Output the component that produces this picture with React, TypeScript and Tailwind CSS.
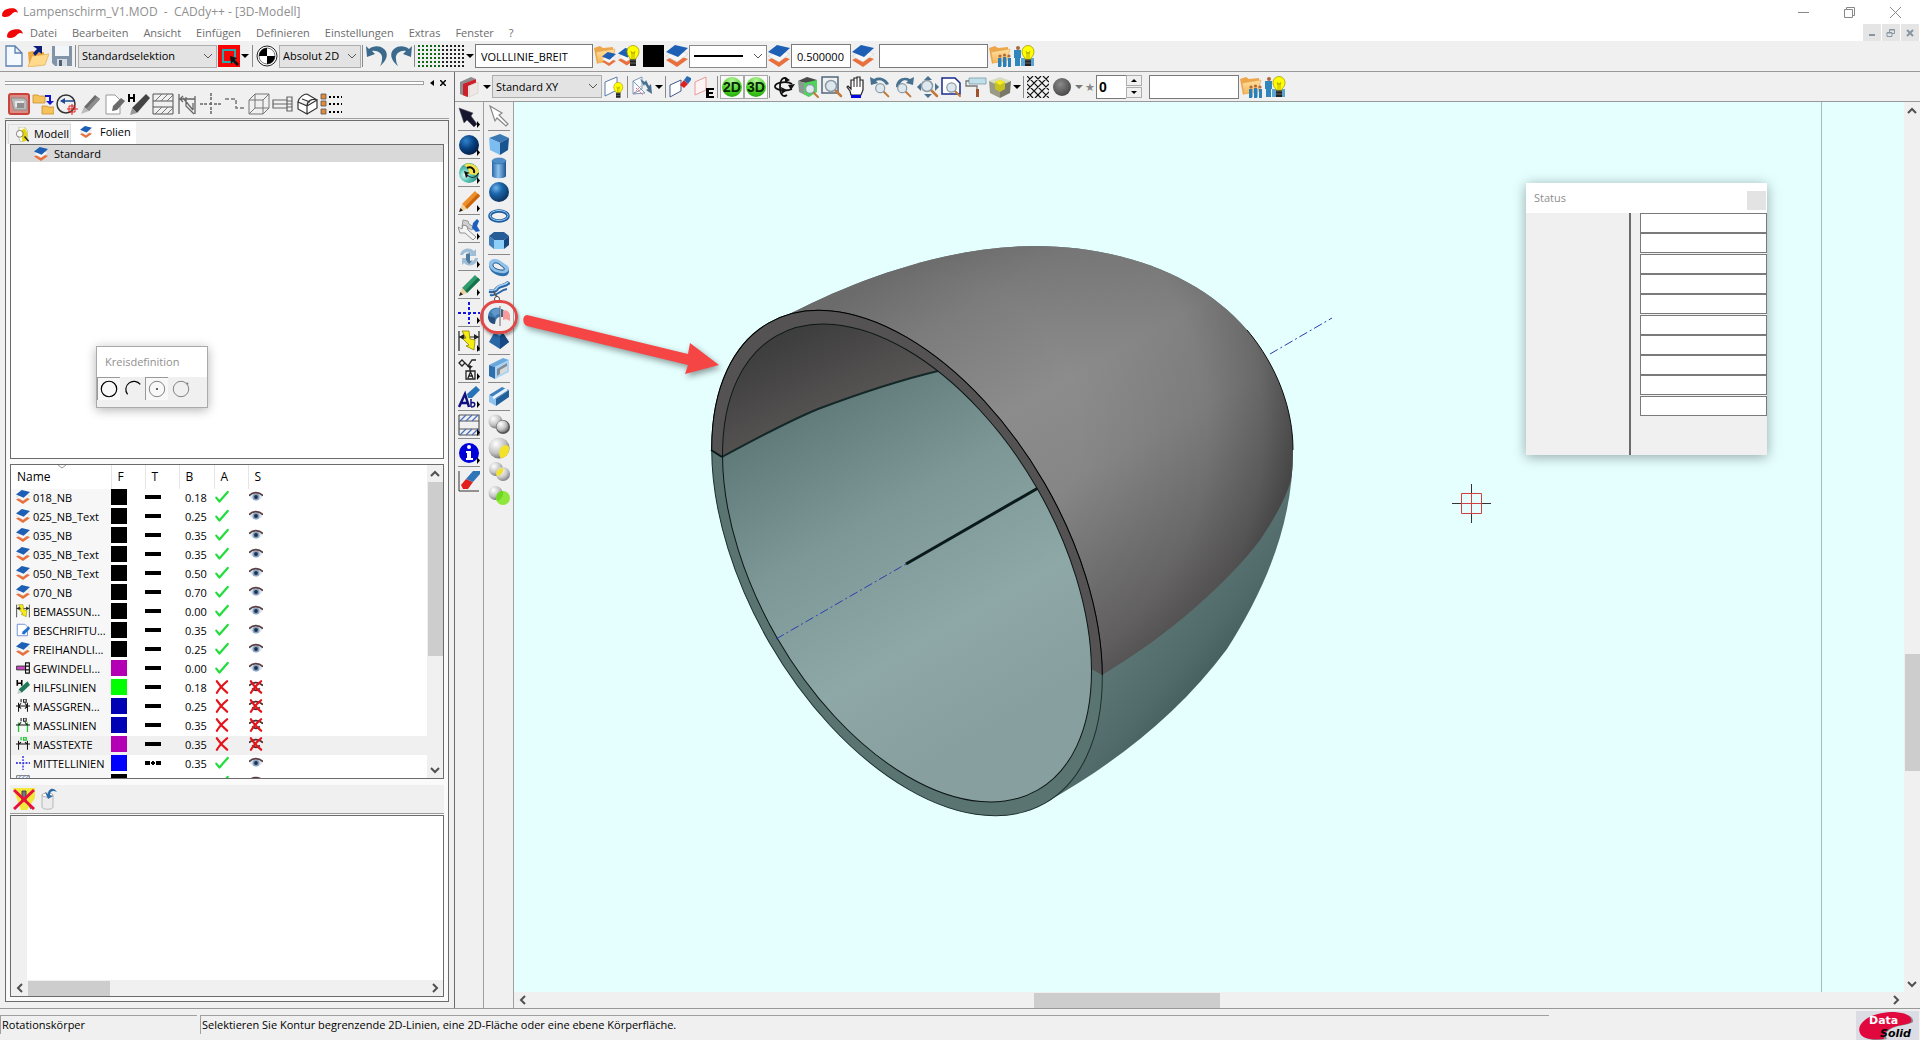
import React from 'react';
import clsx from 'clsx';

type IconProps = { children: React.ReactNode; className?: string };

const Icon: React.FC<IconProps> = ({ children, className }) => (
  <svg viewBox="0 0 22 22" className={clsx('shrink-0', className || 'w-[22px] h-[22px]')} fill="none" aria-hidden="true">
    {children}
  </svg>
);

/* Shared gradients and patterns for all icons */
const IconDefs: React.FC = () => (
  <svg className="absolute w-0 h-0" aria-hidden="true">
    <defs>
      <radialGradient id="blueBall" cx="0.35" cy="0.3" r="0.75">
        <stop offset="0" stopColor="#6fb4ec" />
        <stop offset="0.4" stopColor="#1c66ab" />
        <stop offset="1" stopColor="#0a2f5c" />
      </radialGradient>
      <radialGradient id="darkBall" cx="0.35" cy="0.3" r="0.75">
        <stop offset="0" stopColor="#2f83cc" />
        <stop offset="0.5" stopColor="#0a4384" />
        <stop offset="1" stopColor="#031c42" />
      </radialGradient>
      <radialGradient id="tealBall" cx="0.3" cy="0.6" r="0.75">
        <stop offset="0" stopColor="#e8fffb" />
        <stop offset="0.4" stopColor="#5cc4b6" />
        <stop offset="1" stopColor="#1b8074" />
      </radialGradient>
      <radialGradient id="grayBall" cx="0.35" cy="0.3" r="0.75">
        <stop offset="0" stopColor="#ffffff" />
        <stop offset="0.6" stopColor="#c2c2c2" />
        <stop offset="1" stopColor="#6f6f6f" />
      </radialGradient>
      <radialGradient id="steelBall" cx="0.4" cy="0.35" r="0.7">
        <stop offset="0" stopColor="#8a8a8a" />
        <stop offset="1" stopColor="#454545" />
      </radialGradient>
      <radialGradient id="greenBall" cx="0.5" cy="0.2" r="0.9">
        <stop offset="0" stopColor="#b5f59a" />
        <stop offset="0.6" stopColor="#45cf20" />
        <stop offset="1" stopColor="#1c9a08" />
      </radialGradient>
      <linearGradient id="blueBar" x1="0" x2="1">
        <stop offset="0" stopColor="#2a66a5" />
        <stop offset="0.45" stopColor="#8fc4ee" />
        <stop offset="1" stopColor="#1d5490" />
      </linearGradient>
      <linearGradient id="folder" x1="0" y1="0" x2="0" y2="1">
        <stop offset="0" stopColor="#ffe0a0" />
        <stop offset="1" stopColor="#f6b65a" />
      </linearGradient>
      <pattern id="dotsGreen" width="4" height="4" patternUnits="userSpaceOnUse">
        <rect width="2" height="2" fill="#0a6b14" />
      </pattern>
      <pattern id="dotsBlack" width="4" height="4" patternUnits="userSpaceOnUse">
        <rect width="2" height="2" fill="#222" />
      </pattern>
    </defs>
  </svg>
);

/* ---------- icon shapes ---------- */

const layersShape = (
  <>
    <path d="M0 15l11 7 11-8-6-2-10 0z" fill="#e8703c" />
    <path d="M0 11l11 6 11-8-5-2-11 1z" fill="#f6f6f6" stroke="#ccc" strokeWidth="0.5" />
    <path d="M0 7l9-7 13 3-10 9z" fill="#1d5fb5" />
  </>
);
const bulbShape = (
  <>
    <path d="M12 13h6v8h-6z" fill="#222" />
    <path d="M12 15h6M12 18h6" stroke="#999" strokeWidth="0.6" />
    <path d="M12 14c0-2-3-3-3-7.500a6 6 0 0 1 12 0c0 4.500-3 5.500-3 7.500z" fill="#ffff00" stroke="#a89a00" strokeWidth="0.8" />
    <path d="M13 6l1 3 1-2 1 2 1-3M14 9v4M16 9v4" stroke="#a89a00" strokeWidth="0.8" />
  </>
);
const folderShape = (
  <>
    <path d="M0 3l6-2 3 2 10-1v4L3 19z" fill="#eda74a" />
    <path d="M2 7l19-3-3 12-14 2z" fill="url(#folder)" stroke="#e0a552" strokeWidth="0.6" />
  </>
);
const peopleShape = (
  <>
    <path d="M9 13h3v9H9zM14 12h3v10h-3zM19 13h3v9h-3z" fill="#2f7fb4" />
    <path d="M12.500 13v8M17.500 13v8" stroke="#7ab8de" />
    <circle cx="11" cy="11" r="1.600" fill="#b06a3c" />
    <circle cx="15.500" cy="10" r="1.600" fill="#b06a3c" />
    <circle cx="20" cy="11" r="1.600" fill="#b06a3c" />
  </>
);
const lensShape = (
  <>
    <path d="M14 14l6 6" stroke="#c27a3a" strokeWidth="2.500" strokeLinecap="round" />
    <circle cx="10" cy="10" r="5.500" fill="#dde8ee" stroke="#8b9aa4" strokeWidth="1.500" />
  </>
);
const crossShape = <path d="M3 2c4 6 10 13 16 18M19 2C12 8 7 13 3 20" stroke="#e3141a" strokeWidth="3.500" strokeLinecap="round" />;
const flyout = <path d="M19 15v7l3-3.500z" fill="#000" />;

const pencil = (body: string, dark: string) => (
  <>
    <path d="M17 1l5 5L9 19l-5-5z" fill={body} />
    <path d="M20 3.500l2 2.500L9 19l-2-2z" fill={dark} />
    <path d="M4 14l5 5-8 3z" fill="#f1cf9a" />
    <path d="M1 22l1.500-4 2.500 2.500z" fill="#222" />
  </>
);

const icons = {
  brand: <path d="M0 16c0-7 6-10 14-10 5 0 7 3 8 6-3-2-6-1-8 1-2 4-11 7-14 3z" fill="#f00808" />,
  newFile: <path d="M3 1h9l7 7v13H3zM12 1v7h7" fill="#f4f9ff" stroke="#5a7fb4" strokeWidth="1.300" />,
  open: (
    <>
      <path d="M1 7l5-1 2 2 9-1v12H2z" fill="#eba63c" />
      <path d="M5 11l17-2-4 11-17 2z" fill="#ffd98c" stroke="#e0a040" strokeWidth="0.6" />
      <path d="M6 1h9v8l-3-2-4 4-2-3 4-4z" fill="#0b1f7a" />
    </>
  ),
  save: (
    <>
      <path d="M1 1h20v20H4l-3-3z" fill="#8295a8" />
      <path d="M4 1h14v10H4z" fill="#f3f6f9" />
      <path d="M6 14h10v7H6z" fill="#d7dde4" />
      <path d="M8 15h3v6H8z" fill="#4f6375" />
    </>
  ),
  select: (
    <>
      <path d="M0 0h22v22H0z" fill="#f80404" />
      <path d="M5 5h12v12H5z" stroke="#29a8ae" strokeWidth="2" />
      <path d="M12 11l7 2-2 2 4 4-2 2-4-4-2 2z" fill="#111" />
    </>
  ),
  origin: (
    <>
      <circle cx="11" cy="11" r="10" fill="#fff" stroke="#222" />
      <circle cx="11" cy="11" r="8" fill="#fff" stroke="#222" strokeWidth="0.6" />
      <path d="M11 11V3a8 8 0 0 0-8 8zM11 11v8a8 8 0 0 0 8-8z" fill="#000" />
    </>
  ),
  undo: <path d="M0 1l1 11 8-3-3-3c6-1 11 3 10 8 0 3-1 5-2 7 7-5 9-13 4-17C13 0 7 1 3 4z" fill="#3c6a8c" />,
  redo: <path d="M22 1l-1 11-8-3 3-3C10 5 5 9 6 14c0 3 1 5 2 7C1 16-1 8 4 4c5-4 11-3 15 0z" fill="#3c6a8c" />,
  layers: layersShape,
  folderLayers: (
    <>
      {folderShape}
      <g transform="translate(8 7) scale(0.64)">{layersShape}</g>
    </>
  ),
  layersBulb: (
    <>
      <g transform="translate(0 3) scale(0.8)">{layersShape}</g>
      {bulbShape}
    </>
  ),
  black: <path d="M1 0h21v22H1z" fill="#000" />,
  folderPeople: (
    <>
      {folderShape}
      {peopleShape}
    </>
  ),
  peopleBulb: (
    <>
      <path d="M1 5h7v8H7v8H2v-8H1z" fill="#2f86bd" />
      <circle cx="5" cy="3" r="2" fill="#a8683c" />
      <path d="M8 13h13v8H8z" fill="#5aa5d2" />
      {bulbShape}
    </>
  ),
  redSlab: (
    <>
      <path d="M1 6l11-5 5 2-9 4v14l-7-3z" fill="#8e8e8e" />
      <path d="M4 8l13-5v4l-8 3v11l-5-2z" fill="#cf1f2a" />
      <path d="M10 10l9-4v11l-9 4z" fill="#efe6e6" stroke="#ccb" strokeWidth="0.6" />
    </>
  ),
  planeBulb: (
    <>
      <path d="M2 6l12-5v13L2 20z" stroke="#5b7ba6" fill="#fff" />
      <g transform="translate(4 6) scale(0.75)">{bulbShape}</g>
    </>
  ),
  planeRotate: (
    <>
      <path d="M2 5l9-4v12l-9 5zM2 5l12 12-12 1" stroke="#7f97b8" fill="#f8fbff" />
      <path d="M3 17l7-7M5 12l7 7" stroke="#e06a6a" strokeDasharray="2 1" />
      <path d="M9 3l5 3 1-2 3 6 2-2 1 10-6-4 2-1-3-5-1 2z" fill="#47718f" />
    </>
  ),
  planeErase: (
    <>
      <path d="M1 9l11-5v11L1 21z" stroke="#44598a" fill="#fff" />
      <path d="M11 9l4-5 4 4-4 4z" fill="#e01f1f" />
      <path d="M15 4l3-4 4 2v2l-3 4z" fill="#2b6bb5" />
    </>
  ),
  planeE: (
    <>
      <path d="M2 6l11-5v13L2 19z" stroke="#e89a9a" fill="#fff4f4" />
      <path d="M13 12h8v2h-5v2h4v2h-4v2h5v2h-8z" fill="#000" />
    </>
  ),
  orbit: (
    <>
      <path d="M14 3C10 0 7 4 7 11s3 11 7 8" stroke="#111" strokeWidth="1.800" />
      <path d="M12 1l5 3-5 3z" fill="#111" />
      <path d="M19 8C15 5 3 6 2 10s10 6 17 3" stroke="#111" strokeWidth="1.800" />
      <path d="M8 11l6 3-5 4zM22 8l-4 6-3-5z" fill="#111" />
    </>
  ),
  greenCube: (
    <>
      <path d="M1 5l9-4 10 3-8 4z" fill="#4a4a4a" />
      <path d="M1 5l11 3v13L2 16z" fill="#8b9a90" />
      <path d="M7 7l13-3v12l-8 5-5-3z" fill="#4ed45a" />
      <g transform="translate(5 5) scale(0.8)">{lensShape}</g>
    </>
  ),
  zoomWindow: (
    <>
      <path d="M1 1h16v16H1z" stroke="#53677d" strokeWidth="1.500" />
      {lensShape}
    </>
  ),
  hand: (
    <>
      <path d="M6 19l-1-4-3-4 1-1 3 3V4h3V2h3V1h3v3h3v10l-2 5z" fill="#fff" stroke="#222" strokeWidth="1.200" />
      <path d="M9 4v7M12 2v9M15 4v7" stroke="#222" />
      <path d="M6 19h10v3H6z" fill="#0808e0" />
    </>
  ),
  zoomBack: (
    <>
      <path d="M1 1l1 8 7-2-2-2c4-2 8 0 10 4l3-1C17 2 10 0 5 3z" fill="#47718f" />
      <g transform="translate(3 4) scale(0.82)">{lensShape}</g>
    </>
  ),
  zoomForward: (
    <>
      <path d="M21 1l-1 8-7-2 2-2c-4-2-8 0-9 7l-3-1C3 3 11 0 17 3z" fill="#47718f" />
      <g transform="translate(1 4) scale(0.82)">{lensShape}</g>
    </>
  ),
  zoomAll: (
    <>
      <path d="M11 0l4 4H7zM11 22l4-4H7zM0 11l4-4v8zM22 11l-4-4v8z" fill="#47718f" />
      {lensShape}
    </>
  ),
  zoomPage: (
    <>
      <path d="M1 2h13l5 5v11H1z" fill="#fff" stroke="#1a2a8c" strokeWidth="1.500" />
      <g transform="translate(2 3) scale(0.85)">{lensShape}</g>
    </>
  ),
  roller: (
    <>
      <path d="M4 2h17v6H4z" fill="#bfe0ea" stroke="#7d9ba6" strokeWidth="0.8" />
      <path d="M4 5H1v5h11v4" stroke="#777" strokeWidth="1.300" />
      <path d="M11 13h3v8h-3z" fill="#a0522d" />
    </>
  ),
  boxCube: (
    <>
      <path d="M0 5l11-4 11 4-11 5z" fill="#d8dcc0" />
      <path d="M0 5l11 5v12L1 17z" fill="#9a9a86" />
      <path d="M11 10l11-5-1 12-10 5z" fill="#77776a" />
      <path d="M6 6l5-2 5 2v7l-5 3-5-3z" fill="#c8c220" />
      <path d="M6 6l5-2 5 2-5 3z" fill="#f4ee20" />
    </>
  ),
  hatch: <path d="M0 6l6-6M0 14L14 0M0 22L22 0M8 22L22 8M16 22l6-6M0 16l6 6M0 8l14 14M0 0l22 22M8 0l14 14M16 0l6 6" stroke="#111" strokeWidth="1.200" />,
  steel: <circle cx="11" cy="11" r="9" fill="url(#steelBall)" />,

  /* layer dock toolbar */
  dockLayer: (
    <>
      <rect x="1" y="1" width="20" height="20" rx="2" fill="#d98d86" stroke="#c8443c" strokeWidth="2" />
      <path d="M3 5h13l3 3v9H6z" fill="#b9b9b9" stroke="#8a8a8a" />
      <path d="M7 8h9v6H7z" fill="#e6e6e6" />
      <path d="M9 10h7v5H9z" fill="#8d8d8d" />
    </>
  ),
  dockFolders: (
    <>
      <path d="M1 2h5l1 1h6v7H1zM10 13h5l1 1h6v7H10z" fill="#f5c35a" stroke="#c9912d" strokeWidth="0.800" />
      <path d="M13 3h5v6" stroke="#1414c8" strokeWidth="2" />
      <path d="M14 8h8l-4 4z" fill="#1414c8" />
    </>
  ),
  dockCircle: (
    <>
      <circle cx="10" cy="11" r="9" stroke="#333" strokeWidth="1.500" />
      <path d="M5 8h13" stroke="#1d4a94" strokeWidth="1.500" />
      <path d="M4 8l5-3v6z" fill="#1d4a94" />
      <path d="M13 13h6v6h-6zM11 16h11M16 11v11" stroke="#d22" />
    </>
  ),
  dockPencil: (
    <>
      <path d="M15 2l5 4L9 18l-5-4z" fill="#6b6b6b" />
      <path d="M17 4l3 2L9 18l-3-2z" fill="#8d8d8d" />
      <path d="M4 14l5 4-8 3z" fill="#bbb" />
    </>
  ),
  dockSheet: (
    <>
      <path d="M2 2h9l5 5v14H2z" fill="#fff" stroke="#999" />
      <path d="M17 5l4 3-8 9-5 1 1-5z" fill="#6b6b6b" />
    </>
  ),
  dockHPencil: (
    <>
      <path d="M1 1v8M6 1v8M1 5h5" stroke="#000" strokeWidth="2" />
      <path d="M18 1l4 4L9 20l-5-5z" fill="#444" />
      <path d="M4 15l5 5-7 2z" fill="#999" />
    </>
  ),
  dockHatch: (
    <>
      <path d="M1 1h20v7H1zM1 14h20v7H1zM1 8v6M21 8v6" stroke="#555" />
      <path d="M3 8l7-7M9 8l7-7M15 8l6-6M3 21l7-7M9 21l7-7M15 21l6-6" stroke="#777" />
    </>
  ),
  dockDim: <path d="M3 1v20M19 3v18M3 6h16M7 3l-3 3 3 3M7 5l10 12M10 4v9l8 8M17 10v7" stroke="#666" strokeWidth="1.300" />,
  dockCross: <path d="M0 11h8M14 11h8M11 0v8M11 14v8M9 11h4M11 9v4" stroke="#666" strokeWidth="1.500" strokeDasharray="3 1" />,
  dockStep: <path d="M1 6h11v9h10" stroke="#777" strokeWidth="1.500" strokeDasharray="4 2" />,
  dockWire: <path d="M1 7h14v14H1zM7 1h14v14H7zM1 7l6-6M15 7l6-6M15 21l6-6M1 21l6-6" stroke="#777" />,
  dockBolt: <path d="M1 7h14v8H1zM15 4h5v14h-5zM1 11h19M15 8h5M15 14h5" stroke="#666" strokeWidth="1.200" />,
  dockBlock: <path d="M2 9l9 4v8l-9-5zM11 13l10-6v8l-10 6M2 9c1-5 6-8 9-8l10 6M11 13c0-5 5-8 10-6M6 6l8 3" stroke="#333" strokeWidth="1.200" fill="#fff" />,
  dockList: (
    <>
      <path d="M1 1h5v5H1zM1 8h5v5H1zM1 16h5v5H1z" fill="#e08a3c" stroke="#555" strokeWidth="0.800" />
      <path d="M9 4h13M9 11h13M9 19h13" stroke="#000" strokeWidth="2" strokeDasharray="2 2" />
    </>
  ),

  /* vertical tools */
  cursorDark: <path d="M1 2l14 5-2 3 6 8-3 3-7-7-3 3z" fill="#15152e" stroke="#556" strokeWidth="0.600" />,
  cursorLight: <path d="M2 1l12 7-3 2 9 9-2 2-9-8-2 3z" fill="#fff" stroke="#888" strokeWidth="1.200" />,
  ballDark: <circle cx="11" cy="11" r="10" fill="url(#darkBall)" />,
  ballTurn: (
    <>
      <circle cx="11" cy="11" r="10" fill="url(#tealBall)" />
      <path d="M6 3c6-4 14 0 15 7l-3 3-8-1c2-3 0-6-4-9z" fill="#f2e44a" />
      <path d="M9 6c4-2 8 1 7 5" stroke="#111" strokeWidth="2" />
      <path d="M20 11c-2 5-8 5-11 1l3-1-6-2 2 7 2-2c3 3 9 2 11-3z" fill="#111" />
    </>
  ),
  pencilOrange: pencil('#ee8e2a', '#c8640c'),
  pencilGreen: pencil('#2e9c6c', '#16704a'),
  wrench: (
    <>
      <path d="M5 2l5 1 1 3 5 3-2 3-6-3-4 0z" fill="#cfcfcf" stroke="#888" strokeWidth="0.800" />
      <path d="M15 5l4-4 2 2-2 5 3 5-4 1-4-4z" fill="#1b5fc0" />
      <path d="M0 9l4 2 1-4 4 1 1 4 8 7-3 3-8-7-5 0z" fill="#f4f4f4" stroke="#777" strokeWidth="0.800" />
    </>
  ),
  refresh: (
    <>
      <path d="M2 9c1-6 9-9 14-4l2-2v7h-7l2-2c-3-3-7-2-8 1zM20 12c-1 7-9 10-14 5l-2 2v-7h7l-2 2c3 3 7 2 8-2z" fill="#9fbdd4" />
      <path d="M8 8l4-1v8l3-1-4 4-3-4z" fill="#4d7ba0" />
    </>
  ),
  axes: <path d="M11 0v22M0 11h22" stroke="#1515e0" strokeWidth="2" strokeDasharray="3 2" />,
  dimension: (
    <>
      <path d="M1 1v20M21 1v20M1 7h20" stroke="#222" strokeWidth="1.200" />
      <path d="M1 7l5-3v6zM21 7l-5-3v6z" fill="#222" />
      <path d="M4 1l7 0 1 8 5 1-1 10-8-4 3-1-6-6 3-1z" fill="#f7ec14" stroke="#8a8200" strokeWidth="0.800" />
    </>
  ),
  tolerance: (
    <>
      <path d="M1 5l3-3 3 3-3 3zM7 5l3 3 4-6h4M12 7v6M8 13h9v8H8zM10 20l2.500-6 2.500 6M11 18h4" stroke="#222" strokeWidth="1.300" />
      <path d="M9 8h6l-3 3z" fill="#222" />
    </>
  ),
  textTool: (
    <>
      <path d="M1 21L7 8l4 13M3 17h7" stroke="#101080" strokeWidth="2.500" />
      <path d="M10 12l-1-4 9-8 4 4-8 8z" fill="#2673b8" />
      <path d="M13 13v8M13 17c5-2 5 4 0 4" stroke="#101080" strokeWidth="1.500" />
    </>
  ),
  hatchTool: (
    <>
      <path d="M1 1h20v20H1M1 1v20M1 7h20M1 15h20" stroke="#555" strokeWidth="1.200" />
      <path d="M2 7l6-6M8 7l6-6M14 7l6-6M2 21l6-6M8 21l6-6M14 21l6-6" stroke="#4a6fc0" strokeWidth="1.300" />
    </>
  ),
  info: (
    <>
      <circle cx="11" cy="11" r="10" fill="#0000d8" />
      <circle cx="11" cy="5" r="2" fill="#fff" />
      <path d="M8 9h5v7h2v2H8v-2h1v-5H8z" fill="#fff" />
    </>
  ),
  eraser: (
    <>
      <path d="M1 1v20h20" stroke="#333" />
      <path d="M3 15l5-6 7 3-5 7H5z" fill="#e01f1f" />
      <path d="M8 9l7-8h7v3l-7 8z" fill="#2f76b8" />
    </>
  ),
  cube: (
    <>
      <path d="M1 5l11-4 9 4-9 5z" fill="#3978b4" />
      <path d="M1 5l11 5v12L2 17z" fill="#7dbcf0" />
      <path d="M12 10l9-5-1 12-8 5z" fill="#1a548f" />
    </>
  ),
  cylinder: (
    <>
      <path d="M4 4v15c0 3 14 3 14 0V4z" fill="url(#blueBar)" />
      <ellipse cx="11" cy="4" rx="7" ry="3" fill="#4d8dc8" stroke="#245f9c" strokeWidth="0.500" />
    </>
  ),
  ball: <circle cx="11" cy="11" r="10" fill="url(#blueBall)" />,
  torus: (
    <>
      <ellipse cx="11" cy="11" rx="9" ry="5" stroke="#1c5b9c" strokeWidth="3.500" />
      <ellipse cx="11" cy="10.500" rx="9" ry="5" stroke="#9ed0f8" strokeWidth="1" />
    </>
  ),
  prism: (
    <>
      <path d="M1 7l5-4h10l5 4-5 4H6z" fill="#265d96" />
      <path d="M1 7l5 4v9l-5-4z" fill="#3f80bd" />
      <path d="M6 11h10v9H6z" fill="#8cd0fa" />
      <path d="M16 11l5-4v9l-5 4z" fill="#164780" />
    </>
  ),
  sweep: (
    <>
      <path d="M1 8c0-5 6-6 10-4l9 6c2 4 1 8-3 9-6 1-16-3-16-11z" fill="#2f6fae" />
      <path d="M1 7c0-5 6-6 10-4l9 6c2 4 0 6-3 7C11 17 1 14 1 7z" fill="#8fc0ea" />
      <path d="M5 8c0-2 3-3 6-1l5 4c1 2 0 2-2 2-4 0-9-2-9-5z" fill="#efefef" stroke="#1d5490" />
    </>
  ),
  pipe: (
    <>
      <path d="M1 10c9 1 6-2 10-4s7-1 10-5" stroke="#2a66a5" strokeWidth="4" />
      <path d="M1 9c9 1 6-2 10-4s7-1 9-4" stroke="#a8d3f5" strokeWidth="1.500" />
      <path d="M2 14c8 2 9-5 17-6" stroke="#2a66a5" strokeWidth="2" />
      <path d="M5 10l4 6" stroke="#555" strokeWidth="1.500" />
      <circle cx="9" cy="18" r="2.500" stroke="#444" fill="#fff" />
    </>
  ),
  revolve: (
    <>
      <path d="M0 11C1 4 6 2 12 3v9c-3 0-4 2-5 7-4 0-7-3-7-8z" fill="#3f78ae" />
      <path d="M3 7c2-3 5-4 9-4v6c-3 0-4 1-5 3z" fill="#5f98cc" />
      <path d="M0 11l7 2v6c-4 0-7-3-7-8z" fill="#2a4f7a" />
      <path d="M12 1v20" stroke="#666" />
      <path d="M13 4c3 0 4 3 4 8h-4z" fill="#39658f" />
      <path d="M15 6c4-2 6 1 7 4v6c-3-2-5-2-7-1z" fill="#f79a9a" />
    </>
  ),
  pyramid: (
    <>
      <path d="M6 4h9l6 9-9 7-11-7z" fill="#2a67a6" />
      <path d="M6 4h9l-3 3z" fill="#8cc2ee" />
      <path d="M12 7l3-3 6 9-9 7z" fill="#174a84" />
    </>
  ),
  shell: (
    <>
      <path d="M1 8l14-7 6 2-14 7z" fill="#6aa8de" />
      <path d="M1 8l6 2v12l-6-3z" fill="#2f6fae" />
      <path d="M7 10l14-7v12L7 22z" fill="#a8d3f5" />
      <path d="M9 12l10-6v8l-10 5z" fill="#d9d9d9" />
      <path d="M9 12l10-6v3l-7 4v4l-3 2z" fill="#7f8c98" />
    </>
  ),
  slab: (
    <>
      <path d="M1 10l13-8 7 3L8 14z" fill="#3f7fbe" />
      <path d="M8 14l13-9v7L8 21z" fill="#22609c" />
      <path d="M1 10l7 4v7l-7-4z" fill="#8ec2ee" />
      <path d="M5 13L19 4" stroke="#e4f3ff" strokeWidth="3" />
    </>
  ),
  twoBalls: (
    <>
      <circle cx="7.500" cy="8.500" r="7" fill="url(#grayBall)" />
      <circle cx="15" cy="14" r="7" fill="#555" />
      <circle cx="14.500" cy="13.500" r="6" fill="url(#grayBall)" />
    </>
  ),
  ballSub: (
    <>
      <circle cx="11" cy="11" r="10.500" fill="url(#grayBall)" />
      <path d="M20.500 9c-6-3-12 4-8 12 6 0 10-6 8-12z" fill="#f2e22a" />
    </>
  ),
  ballAnd: (
    <>
      <circle cx="8" cy="8" r="7" fill="url(#grayBall)" />
      <circle cx="15" cy="13" r="7" fill="url(#grayBall)" fillOpacity="0.900" />
      <path d="M15 7c-5 0-8 4-6 8 4 0 7-4 6-8z" fill="#f2e22a" />
    </>
  ),
  ballGreen: (
    <>
      <circle cx="7.500" cy="8" r="7" fill="url(#grayBall)" />
      <circle cx="15" cy="13" r="7" fill="#8fe63c" />
      <path d="M15 6c-5 0-8 4-6 10 4-1 7-5 6-10z" fill="#6fd820" />
    </>
  ),

  /* layer table */
  sheetEdit: (
    <>
      <path d="M2 2h12l4 4v14H2z" fill="#fff" stroke="#5b7fd0" strokeWidth="1.300" />
      <path d="M20 5l2 4-9 9-4-1 2-4z" fill="#1d6fd0" />
    </>
  ),
  bolt: (
    <>
      <path d="M1 8h14v6H1z" fill="#d048c8" stroke="#333" strokeWidth="1.500" />
      <path d="M15 3h6v16h-6zM15 8h6M15 14h6" stroke="#111" strokeWidth="1.800" />
    </>
  ),
  hPencil: (
    <>
      <path d="M2 0v9M9 0v9M2 5h7" stroke="#000" strokeWidth="2.500" />
      <path d="M18 2l4 6L9 20l-5-5z" fill="#1f7a58" />
      <path d="M4 15l5 5-7 2z" fill="#ccc" />
    </>
  ),
  measure: <path d="M4 6v14M18 6v14M0 11h22M4 11l4-4M4 11l4 4M18 11l-4-4M18 11l-4 4M8 0v5M12 0h4v5h-4z" stroke="#111" strokeWidth="1.600" />,
  measureGreen: (
    <>
      <path d="M4 7v15M18 7v15" stroke="#18c830" strokeWidth="2" />
      <path d="M0 11h22M4 11l4-4M18 11l-4-4M8 0v5M12 0h4v5h-4z" stroke="#111" strokeWidth="1.600" />
    </>
  ),
  measureText: (
    <>
      <path d="M4 6v14M18 6v14M0 11h22M4 11l4-3M18 11l-4-3" stroke="#111" strokeWidth="1.600" />
      <path d="M8 0v5M12 0h4v5h-4z" stroke="#18c830" strokeWidth="2" />
    </>
  ),
  check: <path d="M2 12l5 6L20 3" stroke="#22dd3c" strokeWidth="3.500" strokeLinecap="round" strokeLinejoin="round" />,
  cross: crossShape,
  eye: (
    <>
      <path d="M1 10c6-6 14-6 20 0-4 9-15 9-20 0z" fill="#dde5ee" />
      <circle cx="11" cy="11" r="5.500" fill="#86a2c0" />
      <circle cx="11" cy="11" r="3" fill="#1c3350" />
      <path d="M0 9c6-7 16-6 22 0" stroke="#5b3f42" strokeWidth="2.800" />
    </>
  ),
  eyeOff: (
    <>
      <path d="M0 9c6-7 16-6 22 0M5 13c4 4 8 4 12 0" stroke="#4b2f32" strokeWidth="2.800" />
      {crossShape}
    </>
  ),

  clearSelection: (
    <>
      <path d="M0 0h22v10l-8 12H8z" fill="#f0e83a" />
      <path d="M9 3h4v10H9zM14 14l4 7" fill="#777" stroke="#444" />
      <path d="M1 2l20 19M21 2L1 21" stroke="#e8103c" strokeWidth="3" />
    </>
  ),
  restore: (
    <>
      <path d="M3 7v12c0 3 11 3 11 0V7z" fill="#ececec" stroke="#aaa" strokeWidth="0.800" />
      <ellipse cx="8.500" cy="7" rx="5.500" ry="2" fill="#fff" stroke="#999" strokeWidth="0.800" />
      <path d="M18 4c-4-6-9-3-9 2L6 4l3 7 5-3-3-1c0-4 3-5 7-3z" fill="#2b6ca8" />
    </>
  ),
  modelTab: (
    <>
      <path d="M6 0h8l4 5v14l-10 3-3-7z" fill="#fffce0" stroke="#999" strokeWidth="0.800" />
      <path d="M9 5l5-3 4 6v11l-7 3z" fill="#e4d60c" />
      <circle cx="7" cy="10" r="5" stroke="#555" fill="#ffffffcc" />
      <path d="M14 14l6 7" stroke="#222" strokeWidth="2" />
    </>
  ),
};

type IconName = keyof typeof icons;

/* ---------- small controls ---------- */

const ToolButton: React.FC<{ icon: IconName; label: string; className?: string }> = ({ icon, label, className }) => (
  <button type="button" aria-label={label} className={clsx('h-6 w-6 shrink-0 flex items-center justify-center', className)}>
    <Icon>{icons[icon]}</Icon>
  </button>
);

const DropButton: React.FC<{ label: string; className?: string }> = ({ label, className }) => (
  <button type="button" aria-label={label} className={clsx('h-6 w-[10px] shrink-0 flex items-center justify-center text-black', className)}>
    <svg viewBox="0 0 8 4" className="w-2 h-1" fill="currentColor"><path d="M0 0h8L4 4z" /></svg>
  </button>
);

const Sep: React.FC = () => <div className="w-px h-[22px] ml-px mr-[2px] shrink-0 bg-[#8a8a8a]" />;

const Chevron: React.FC<{ dir: 'up' | 'down' | 'left' | 'right' }> = ({ dir }) => {
  const d = { up: 'M2 8l4-4 4 4', down: 'M2 4l4 4 4-4', left: 'M8 2L4 6l4 4', right: 'M4 2l4 4-4 4' };
  return (
    <svg viewBox="0 0 12 12" className="w-3 h-3" fill="none" stroke="#505050" strokeWidth="2"><path d={d[dir]} /></svg>
  );
};

const Combo: React.FC<{ label: string; value: string; className: string }> = ({ label, value, className }) => (
  <div className={clsx('relative shrink-0', className)}>
    <select aria-label={label} defaultValue={value} className="appearance-none w-full h-full pl-[3px] pr-4 border border-[#adadad] bg-[#e3e3e3] text-black">
      <option>{value}</option>
    </select>
    <svg viewBox="0 0 10 6" className="absolute right-1 top-2 w-[10px] h-[6px] pointer-events-none" fill="none" stroke="#555"><path d="M1 1l4 4 4-4" /></svg>
  </div>
);

const Field: React.FC<{ label: string; value?: string; className: string }> = ({ label, value, className }) => (
  <input type="text" aria-label={label} defaultValue={value} className={clsx('h-6 shrink-0 px-[5px] border border-[#7a7a7a] bg-white text-black', className)} />
);

/* ---------- bars ---------- */

const TitleBar: React.FC = () => (
  <header className="h-6 flex items-center pl-[2px] bg-white text-[#8f8f8f]">
    <Icon className="w-4 h-4">{icons.brand}</Icon>
    <h1 className="flex-1 ml-[5px] text-xs whitespace-pre">{'Lampenschirm_V1.MOD  -  CADdy++ - [3D-Modell]'}</h1>
    <div className="flex pr-[2px]">
      <button type="button" aria-label="Minimieren" className="w-[46px] h-5 flex items-center justify-center">
        <svg viewBox="0 0 11 11" className="w-[11px] h-[11px]" stroke="#888"><path d="M0 5.500h11" /></svg>
      </button>
      <button type="button" aria-label="Wiederherstellen" className="w-[46px] h-5 flex items-center justify-center">
        <svg viewBox="0 0 11 11" className="w-[11px] h-[11px]" fill="none" stroke="#888"><path d="M.5 2.500h8v8h-8zM2.500 2.500v-2h8v8h-2" /></svg>
      </button>
      <button type="button" aria-label="Schließen" className="w-[46px] h-5 flex items-center justify-center">
        <svg viewBox="0 0 11 11" className="w-[11px] h-[11px]" stroke="#888"><path d="M0 0l11 11M11 0L0 11" /></svg>
      </button>
    </div>
  </header>
);

const menus = ['Datei', 'Bearbeiten', 'Ansicht', 'Einfügen', 'Definieren', 'Einstellungen', 'Extras', 'Fenster', '?'];

const MenuBar: React.FC = () => (
  <nav className="h-[17px] flex items-center pl-[7px] bg-white text-[#6d6d6d]">
    <Icon className="w-4 h-4">{icons.brand}</Icon>
    <div className="flex-1 flex gap-[15px] ml-[7px]">
      {menus.map((m) => (
        <button type="button" key={m}>{m}</button>
      ))}
    </div>
    <div className="flex gap-px pr-px text-[#8796a3]">
      <button type="button" aria-label="Fenster minimieren" className="w-[18px] h-[17px] bg-[#e5e5e5] flex items-center justify-center">
        <svg viewBox="0 0 10 10" className="w-[10px] h-[10px]" fill="currentColor"><path d="M2 6h6v2H2z" /></svg>
      </button>
      <button type="button" aria-label="Fenster wiederherstellen" className="w-[18px] h-[17px] bg-[#e5e5e5] flex items-center justify-center">
        <svg viewBox="0 0 10 10" className="w-[10px] h-[10px]" fill="none" stroke="currentColor"><path d="M1 4.500h5v4H1zM1 5h5M3.500 4V1.500h5v4H6M4 2h5" /></svg>
      </button>
      <button type="button" aria-label="Fenster schließen" className="w-[18px] h-[17px] bg-[#e5e5e5] flex items-center justify-center">
        <svg viewBox="0 0 10 10" className="w-[10px] h-[10px]" stroke="currentColor" strokeWidth="2"><path d="M2 2l6 6M8 2L2 8" /></svg>
      </button>
    </div>
  </nav>
);

const MainToolbar: React.FC = () => (
  <div className="h-[31px] flex items-center pl-[2px] border-b border-[#999]">
    <ToolButton icon="newFile" label="Neu" />
    <ToolButton icon="open" label="Öffnen" />
    <ToolButton icon="save" label="Speichern" />
    <Sep />
    <Combo label="Selektion" value="Standardselektion" className="w-[139px] h-[23px] mr-px" />
    <button type="button" aria-label="Selektionsmodus" className="w-[22px] h-6 flex items-center"><Icon>{icons.select}</Icon></button>
    <DropButton label="Selektionsmodus wählen" className="mr-px" />
    <Sep />
    <ToolButton icon="origin" label="Bezugspunkt" />
    <Combo label="Koordinaten" value="Absolut 2D" className="w-[82px] h-[23px]" />
    <Sep />
    <ToolButton icon="undo" label="Rückgängig" />
    <ToolButton icon="redo" label="Wiederherstellen" />
    <Sep />
    <button type="button" aria-label="Raster" className="w-[48px] h-6 shrink-0 flex items-center justify-center">
      <svg viewBox="0 0 46 22" className="w-[46px] h-[22px]">
        <path d="M0 0h24v22H0z" fill="url(#dotsGreen)" />
        <path d="M24 0h22v22H24z" fill="url(#dotsBlack)" />
      </svg>
    </button>
    <DropButton label="Raster wählen" />
    <Field label="Folie" value="VOLLLINIE_BREIT" className="w-[118px]" />
    <ToolButton icon="folderLayers" label="Folie wählen" />
    <ToolButton icon="layersBulb" label="Folie zeigen" />
    <ToolButton icon="black" label="Farbe" />
    <ToolButton icon="layers" label="Farbe nach Folie" />
    <div className="relative w-[78px] h-[23px] shrink-0">
      <select aria-label="Linientyp" className="appearance-none w-full h-full border border-[#8a8a8a] bg-white" />
      <div className="absolute left-[5px] top-[10px] w-[49px] h-[2px] bg-black pointer-events-none" />
      <svg viewBox="0 0 10 6" className="absolute right-1 top-2 w-[10px] h-[6px] pointer-events-none" fill="none" stroke="#555"><path d="M1 1l4 4 4-4" /></svg>
    </div>
    <ToolButton icon="layers" label="Linientyp nach Folie" />
    <Field label="Linienbreite" value="0.500000" className="w-[60px]" />
    <ToolButton icon="layers" label="Breite nach Folie" />
    <Field label="Gruppe" className="w-[109px] ml-1" />
    <ToolButton icon="folderPeople" label="Gruppe wählen" />
    <ToolButton icon="peopleBulb" label="Gruppe zeigen" />
  </div>
);

const ModeButton: React.FC<{ text: string }> = ({ text }) => (
  <button type="button" className="w-6 h-6 shrink-0 flex items-center justify-center border border-[#a8a8a8] bg-[#f8f8f8]">
    <svg viewBox="0 0 22 22" className="w-[22px] h-[22px]">
      <circle cx="11" cy="11" r="10" fill="url(#greenBall)" />
      <text x="11" y="16" textAnchor="middle" fontSize="14" fontWeight="bold" fontFamily="Liberation Sans, sans-serif" fill="#062806">{text}</text>
    </svg>
  </button>
);

const ViewToolbar: React.FC = () => (
  <div className="h-[30px] flex items-center pl-[3px] border-b border-[#999]">
    <ToolButton icon="redSlab" label="Arbeitsebene" />
    <DropButton label="Arbeitsebene wählen" />
    <Combo label="Ebene" value="Standard XY" className="w-[110px] h-[23px]" />
    <ToolButton icon="planeBulb" label="Ebene zeigen" />
    <Sep />
    <ToolButton icon="planeRotate" label="Ebene drehen" />
    <DropButton label="Drehung wählen" />
    <Sep />
    <ToolButton icon="planeErase" label="Ebene löschen" />
    <ToolButton icon="planeE" label="Ebene bearbeiten" />
    <Sep />
    <ModeButton text="2D" />
    <ModeButton text="3D" />
    <Sep />
    <ToolButton icon="orbit" label="Drehen" />
    <ToolButton icon="greenCube" label="Ansicht zoomen" />
    <ToolButton icon="zoomWindow" label="Fenster zoomen" />
    <ToolButton icon="hand" label="Verschieben" />
    <ToolButton icon="zoomBack" label="Zoom zurück" />
    <ToolButton icon="zoomForward" label="Zoom vor" />
    <ToolButton icon="zoomAll" label="Alles zeigen" />
    <ToolButton icon="zoomPage" label="Blatt zeigen" />
    <ToolButton icon="roller" label="Neu zeichnen" />
    <ToolButton icon="boxCube" label="Darstellung" />
    <DropButton label="Darstellung wählen" />
    <Sep />
    <ToolButton icon="hatch" label="Schraffur" />
    <ToolButton icon="steel" label="Material" />
    <DropButton label="Material wählen" className="opacity-50" />
    <span className="w-3 shrink-0 text-center text-[#888]">★</span>
    <input type="text" aria-label="Stufe" defaultValue="0" className="w-[30px] h-6 shrink-0 pl-[2px] border border-r-0 border-[#7a7a7a] bg-white text-black font-bold text-sm font-['Liberation_Sans',sans-serif]" />
    <div className="flex flex-col gap-px w-4 shrink-0">
      <button type="button" aria-label="Erhöhen" className="h-[11px] border border-[#adadad] flex items-center justify-center">
        <svg viewBox="0 0 6 3" className="w-[6px] h-[3px]"><path d="M0 3h6L3 0z" /></svg>
      </button>
      <button type="button" aria-label="Verringern" className="h-[11px] border border-[#adadad] flex items-center justify-center">
        <svg viewBox="0 0 6 3" className="w-[6px] h-[3px]"><path d="M0 0h6L3 3z" /></svg>
      </button>
    </div>
    <Field label="Suche" className="w-[90px] ml-[7px]" />
    <ToolButton icon="folderPeople" label="Gruppe öffnen" />
    <ToolButton icon="peopleBulb" label="Gruppe anzeigen" />
  </div>
);

/* ---------- left dock ---------- */

const dockTools: IconName[] = [
  'dockLayer', 'dockFolders', 'dockCircle', 'dockPencil', 'dockSheet', 'dockHPencil', 'dockHatch',
  'dockDim', 'dockCross', 'dockStep', 'dockWire', 'dockBolt', 'dockBlock', 'dockList',
];

type LayerRow = { icon: IconName; name: string; color: string; width: string; on: boolean; dashed?: boolean };

const layerRows: LayerRow[] = [
  { icon: 'layers', name: '018_NB', color: '#000000', width: '0.18', on: true },
  { icon: 'layers', name: '025_NB_Text', color: '#000000', width: '0.25', on: true },
  { icon: 'layers', name: '035_NB', color: '#000000', width: '0.35', on: true },
  { icon: 'layers', name: '035_NB_Text', color: '#000000', width: '0.35', on: true },
  { icon: 'layers', name: '050_NB_Text', color: '#000000', width: '0.50', on: true },
  { icon: 'layers', name: '070_NB', color: '#000000', width: '0.70', on: true },
  { icon: 'dimension', name: 'BEMASSUN...', color: '#000000', width: '0.00', on: true },
  { icon: 'sheetEdit', name: 'BESCHRIFTU...', color: '#000000', width: '0.35', on: true },
  { icon: 'layers', name: 'FREIHANDLI...', color: '#000000', width: '0.25', on: true },
  { icon: 'bolt', name: 'GEWINDELI...', color: '#b400b4', width: '0.00', on: true },
  { icon: 'hPencil', name: 'HILFSLINIEN', color: '#00ff00', width: '0.18', on: false },
  { icon: 'measure', name: 'MASSGREN...', color: '#0000b4', width: '0.25', on: false },
  { icon: 'measureGreen', name: 'MASSLINIEN', color: '#0000b4', width: '0.35', on: false },
  { icon: 'measureText', name: 'MASSTEXTE', color: '#b400b4', width: '0.35', on: false },
  { icon: 'axes', name: 'MITTELLINIEN', color: '#0000ff', width: '0.35', on: true, dashed: true },
  { icon: 'hatchTool', name: '', color: '#000000', width: '', on: true },
];

const LayerTable: React.FC = () => (
  <div className="h-[315px] flex border border-[#6b6b6b] bg-white overflow-hidden">
    <div className="flex-1 overflow-hidden">
      <table className="w-full table-fixed border-collapse text-left">
        <thead>
          <tr className="h-6">
            <th className="w-[100px] pl-[6px] font-normal relative text-xs">
              Name
              <svg viewBox="0 0 8 4" className="absolute left-[47px] top-0 w-2 h-1" fill="none" stroke="#999"><path d="M0 0l4 3 4-3" /></svg>
            </th>
            <th className="w-[34px] pl-[6px] font-normal border-l border-[#e5e5e5] text-xs">F</th>
            <th className="w-[34px] pl-[6px] font-normal border-l border-[#e5e5e5] text-xs">T</th>
            <th className="w-[35px] pl-[6px] font-normal border-l border-[#e5e5e5] text-xs">B</th>
            <th className="w-[34px] pl-[6px] font-normal border-l border-[#e5e5e5] text-xs">A</th>
            <th className="pl-[6px] font-normal border-l border-[#e5e5e5] text-xs">S</th>
          </tr>
        </thead>
        <tbody>
          {layerRows.map((row, i) => (
            <tr key={i} className={clsx('h-[19px] align-top', row.name === 'MASSTEXTE' && 'bg-[#f0f0f0]')}>
              <td className={clsx('p-0', row.name !== 'MASSTEXTE' && 'bg-[#f7f7f7]')}>
                <div className="h-[19px] flex items-start gap-[3px] pl-[5px] whitespace-nowrap">
                  <Icon className="w-[14px] h-[14px] mt-px">{icons[row.icon]}</Icon>
                  <span className="leading-[18px]">{row.name}</span>
                </div>
              </td>
              <td className="p-0"><div className="w-4 h-4" style={{ backgroundColor: row.color }} /></td>
              <td className="p-0">
                {row.name && (
                  <svg viewBox="0 0 16 4" className="w-4 h-1 mt-[6px]" fill="#000">
                    <path d={row.dashed ? 'M0 0h5v4H0zM6 1h4v2H6zM7 0h2v4H7zM11 0h5v4h-5z' : 'M0 0h16v4H0z'} />
                  </svg>
                )}
              </td>
              <td className="p-0 pl-[6px] leading-[18px]">{row.width}</td>
              <td className="p-0 pl-px"><Icon className="w-[14px] h-[14px] mt-px">{row.on ? icons.check : icons.cross}</Icon></td>
              <td className="p-0 pl-px"><Icon className="w-[14px] h-[14px] mt-px">{row.on ? icons.eye : icons.eyeOff}</Icon></td>
            </tr>
          ))}
        </tbody>
      </table>
    </div>
    <div className="w-4 flex flex-col items-center bg-[#f0f0f0]">
      <button type="button" aria-label="Nach oben" className="w-4 h-[17px] flex items-center justify-center"><Chevron dir="up" /></button>
      <div className="flex-1 w-[15px]"><div className="h-[174px] bg-[#cdcdcd]" /></div>
      <button type="button" aria-label="Nach unten" className="w-4 h-[17px] flex items-center justify-center"><Chevron dir="down" /></button>
    </div>
  </div>
);

const CircleDefinition: React.FC = () => (
  <section className="absolute left-[85px] top-[201px] w-[112px] h-[62px] bg-[#f0f0f0] border border-[#aaa] shadow-[0_2px_10px_rgba(0,0,0,0.3)] z-10">
    <h2 className="h-[30px] flex items-center pl-2 bg-white text-[#8f8f8f]">Kreisdefinition</h2>
    <div className="flex gap-px">
      <button type="button" aria-label="Kreis" className="w-[23px] h-[23px] border-l border-t border-[#999] bg-[#f8f8f8] flex items-center justify-center">
        <Icon className="w-5 h-5"><circle cx="11" cy="11" r="8.500" stroke="#000" strokeWidth="1.300" /></Icon>
      </button>
      <button type="button" aria-label="Bogen" className="w-[23px] h-[23px] flex items-center justify-center">
        <Icon className="w-5 h-5"><path d="M5 17A8.500 8.500 0 0 1 19 6" stroke="#000" strokeWidth="1.300" /></Icon>
      </button>
      <button type="button" aria-label="Mittelpunkt" className="w-[23px] h-[23px] border-l border-t border-[#999] bg-[#f8f8f8] flex items-center justify-center">
        <Icon className="w-5 h-5"><circle cx="11" cy="11" r="8.500" stroke="#777" /><path d="M10 10h2v2h-2z" fill="#555" /></Icon>
      </button>
      <button type="button" aria-label="Umfang" className="w-[23px] h-[23px] flex items-center justify-center">
        <Icon className="w-5 h-5"><circle cx="11" cy="11" r="8.500" stroke="#777" /><path d="M17 4h2v2h-2z" fill="#777" /></Icon>
      </button>
    </div>
  </section>
);

const LeftDock: React.FC = () => (
  <aside className="w-[455px] shrink-0 flex flex-col pl-[5px] pr-[5px] pt-2 pb-[6px] border-r border-[#6b6b6b]">
    <div className="h-[5px] flex items-center">
      <div className="w-[419px] h-[4px] border-y border-r border-[#a0a0a0] bg-white" />
      <button type="button" aria-label="Andocken" className="ml-[6px]">
        <svg viewBox="0 0 4 6" className="w-1 h-[6px]"><path d="M4 0v6L0 3z" /></svg>
      </button>
      <button type="button" aria-label="Leiste schließen" className="ml-[6px]">
        <svg viewBox="0 0 6 6" className="w-[6px] h-[6px]" stroke="#000" strokeWidth="1.500"><path d="M0 0l6 6M6 0L0 6" /></svg>
      </button>
    </div>
    <div className="h-[34px] flex items-center pl-[2px] pt-[5px] border-b border-[#a0a0a0]">
      {dockTools.map((name) => (
        <ToolButton key={name} icon={name} label={name.replace('dock', '')} />
      ))}
    </div>
    <div className="flex-1 mt-px flex flex-col border border-[#6b6b6b] bg-[#fafafa]">
      <div role="tablist" className="h-[23px] flex items-end pl-[2px] bg-[#f0f0f0]">
        <button type="button" role="tab" aria-selected="false" className="w-[63px] h-5 flex items-center gap-[4px] pl-[6px] pb-px border border-b-0 border-[#dcdcdc]">
          <Icon className="w-[15px] h-[15px]">{icons.modelTab}</Icon>
          Modell
        </button>
        <button type="button" role="tab" aria-selected="true" className="w-[65px] h-[22px] flex items-center gap-[8px] pl-[9px] pb-[3px] bg-white">
          <Icon className="w-3 h-3">{layersShape}</Icon>
          Folien
        </button>
      </div>
      <div className="flex-1 flex flex-col px-1 pb-1">
        <div className="relative h-[315px] border border-[#6b6b6b] bg-white">
          <div className="h-[17px] flex items-center gap-[6px] pl-[23px] bg-[#d9d9d9]">
            <Icon className="w-[14px] h-[14px]">{layersShape}</Icon>
            Standard
          </div>
          <CircleDefinition />
        </div>
        <div className="h-[5px]" />
        <LayerTable />
        <div className="h-[29px] mt-[6px] flex items-center gap-[2px] pl-[2px] bg-[#f0f0f0] border-b border-[#999]">
          <ToolButton icon="clearSelection" label="Auswahl löschen" />
          <ToolButton icon="restore" label="Zurückholen" />
        </div>
        <div className="flex-1 mt-px flex flex-col border border-[#6b6b6b] bg-white">
          <div className="flex-1 w-4 bg-[#f0f0f0]" />
          <div className="h-4 flex items-center bg-[#f0f0f0]">
            <button type="button" aria-label="Nach links" className="w-[17px] h-4 flex items-center justify-center"><Chevron dir="left" /></button>
            <div className="flex-1"><div className="w-[82px] h-[15px] bg-[#cdcdcd]" /></div>
            <button type="button" aria-label="Nach rechts" className="w-[17px] h-4 flex items-center justify-center"><Chevron dir="right" /></button>
          </div>
        </div>
      </div>
    </div>
  </aside>
);

/* ---------- vertical tool columns ---------- */

const editTools: IconName[] = [
  'cursorDark', 'ballDark', 'ballTurn', 'pencilOrange', 'wrench', 'refresh', 'pencilGreen',
  'axes', 'dimension', 'tolerance', 'textTool', 'hatchTool', 'info', 'eraser',
];

const solidGroups: IconName[][] = [
  ['cursorLight'],
  ['cube', 'cylinder', 'ball', 'torus', 'prism'],
  ['sweep', 'pipe', 'revolve', 'pyramid'],
  ['shell'],
  ['slab'],
  ['twoBalls', 'ballSub', 'ballAnd', 'ballGreen'],
];

const ToolColumns: React.FC = () => (
  <div className="flex shrink-0">
    <div className="w-[29px] flex flex-col items-center pt-px border-r border-[#a0a0a0]">
      {editTools.map((name, i) => (
        <button
          type="button"
          key={name}
          aria-label={name}
          className={clsx('w-[22px] h-7 flex items-center justify-center', i < editTools.length - 1 && 'border-b border-[#8a8a8a]')}
        >
          <Icon>
            {icons[name]}
            {name !== 'eraser' && flyout}
          </Icon>
        </button>
      ))}
    </div>
    <div className="w-[30px] flex flex-col items-center pt-[2px] border-r border-[#a0a0a0]">
      {solidGroups.map((group, g) => (
        <div key={g} className={clsx('flex flex-col items-center pb-[2px] mb-px', g < solidGroups.length - 1 && 'border-b border-[#8a8a8a]')}>
          {group.map((name) => (
            <button type="button" key={name} aria-label={name} className="relative w-[22px] h-6 flex items-center justify-center">
              <Icon>{icons[name]}</Icon>
              {name === 'revolve' && (
                <span className="absolute -left-2 -top-1 w-[38px] h-[34px] rounded-full border-[3px] border-[#e04848] shadow-[1px_2px_3px_rgba(0,0,0,0.4)] z-20" />
              )}
            </button>
          ))}
        </div>
      ))}
    </div>
  </div>
);

/* ---------- 3D view ---------- */

const BODY =
  'M84 87C150 52 245 16 335 16C420 16 500 45 547 100C578 137 593 180 593 220C593 300 560 367 527 419C480 482 420 530 347 572L207 334Z';
const SHELL = 'M402 445C470 405 530 350 560 310C580 280 590 260 593 240L640 0H0V200L207 334Z';
const SEAM = 'M22 227C52 211 84 193 118 179C158 164 196 151 238 141';

const Lampshade: React.FC = () => (
  <svg viewBox="0 0 640 600" className="absolute left-[186px] top-[128px] w-[640px] h-[600px]" fill="none" role="img" aria-label="Lampenschirm">
    <defs>
      <linearGradient id="outerGray" gradientUnits="userSpaceOnUse" x1="250" y1="10" x2="475" y2="400">
        <stop offset="0" stopColor="#6c6c6c" />
        <stop offset="0.15" stopColor="#7c7c7c" />
        <stop offset="0.4" stopColor="#8c8c8c" />
        <stop offset="0.6" stopColor="#868686" />
        <stop offset="1" stopColor="#646262" />
      </linearGradient>
      <radialGradient id="edgeShade" gradientUnits="userSpaceOnUse" cx="230" cy="200" r="370">
        <stop offset="0.4" stopColor="#000" stopOpacity="0" />
        <stop offset="0.75" stopColor="#000" stopOpacity="0.08" />
        <stop offset="0.9" stopColor="#000" stopOpacity="0.22" />
        <stop offset="1" stopColor="#000" stopOpacity="0.42" />
      </radialGradient>
      <linearGradient id="outerTeal" gradientUnits="userSpaceOnUse" x1="430" y1="410" x2="500" y2="470">
        <stop offset="0" stopColor="#5b7675" />
        <stop offset="0.6" stopColor="#506b69" />
        <stop offset="1" stopColor="#425c5a" />
      </linearGradient>
      <linearGradient id="innerTeal" gradientUnits="userSpaceOnUse" x1="110" y1="170" x2="300" y2="500">
        <stop offset="0" stopColor="#5f7978" />
        <stop offset="0.35" stopColor="#7d9796" />
        <stop offset="0.7" stopColor="#8ea8a7" />
        <stop offset="1" stopColor="#879f9e" />
      </linearGradient>
      <linearGradient id="innerGray" gradientUnits="userSpaceOnUse" x1="80" y1="110" x2="125" y2="200">
        <stop offset="0" stopColor="#3e3e3e" />
        <stop offset="1" stopColor="#5a5656" />
      </linearGradient>
      <clipPath id="upperHalf"><path d="M-20 202L11 220L402 445L460 478V-20H-20Z" /></clipPath>
      <clipPath id="innerRim"><ellipse cx="207" cy="333" rx="262" ry="150" transform="rotate(60 207 333)" /></clipPath>
      <clipPath id="bodyClip"><path d={BODY} /></clipPath>
    </defs>

    <path d={BODY} fill="url(#outerTeal)" />
    <g clipPath="url(#bodyClip)">
      <path d={SHELL} fill="url(#outerGray)" />
      <path d={SHELL} fill="url(#edgeShade)" />
    </g>
    <path d="M547 100C578 137 593 180 593 220" stroke="#111" />

    {/* rim */}
    <ellipse cx="207" cy="333" rx="277" ry="159" transform="rotate(60 207 333)" fill="#5a7472" stroke="#1c2f2e" />
    <g clipPath="url(#upperHalf)">
      <ellipse cx="207" cy="333" rx="277" ry="159" transform="rotate(60 207 333)" fill="#545252" stroke="#000" />
    </g>

    {/* inside */}
    <g clipPath="url(#innerRim)">
      <path d="M0 0h440v600H0z" fill="url(#innerTeal)" />
      <path d={`${SEAM}L300 120V0H0V240Z`} fill="url(#innerGray)" />
      <path d={SEAM} stroke="#142827" strokeWidth="2" />
      <path d="M206 334L345 254" stroke="#0a1a1a" strokeWidth="3" />
    </g>
    <ellipse cx="207" cy="333" rx="262" ry="150" transform="rotate(60 207 333)" stroke="#0c1616" />
    <path d="M11 220l11 7" stroke="#0a1a1a" strokeWidth="2" />

    {/* axis */}
    <path d="M76 409L206 334M570 124L632 88" stroke="#2a3fae" strokeDasharray="9 3 2 3" />
  </svg>
);

const StatusWindow: React.FC = () => (
  <section className="absolute left-[1012px] top-[81px] w-[241px] h-[272px] flex flex-col bg-[#f0f0f0] shadow-[0_2px_12px_rgba(0,0,0,0.35)]">
    <div className="h-[30px] shrink-0 flex items-center justify-between pl-2 pr-px bg-white text-[#8f8f8f]">
      <h2>Status</h2>
      <button type="button" aria-label="Status schließen" className="w-[19px] h-[19px] mt-1 bg-[#e3e3e3]" />
    </div>
    <div className="flex-1 flex">
      <div className="w-[105px] border-r-2 border-[#6b6b6b]" />
      <div className="flex-1 ml-[9px]">
        {Array.from({ length: 10 }).map((_, i) => (
          <input
            key={i}
            type="text"
            aria-label={`Statuswert ${i + 1}`}
            className={clsx('block w-full h-5 border border-[#7a7a7a] bg-white', (i === 2 || i === 5 || i === 9) && 'mt-px')}
          />
        ))}
      </div>
    </div>
  </section>
);

const Viewport: React.FC = () => (
  <main className="flex-1 flex flex-col">
    <div className="flex-1 flex">
      <div className="relative flex-1 overflow-hidden bg-[#e4fffe]">
        <Lampshade />
        {/* sheet border */}
        <div className="absolute right-[82px] inset-y-0 w-px bg-[#a9bcbc]" />
        <svg viewBox="0 0 210 80" className="absolute left-0 top-[200px] w-[210px] h-20 drop-shadow-[2px_3px_3px_rgba(0,0,0,0.4)]">
          <path d="M13 13c-5 0-5 9 0 11L174 63l-3 9 34-9-29-22-2 11z" fill="#f54545" />
        </svg>
        <svg viewBox="0 0 40 40" className="absolute left-[937px] top-[381px] w-10 h-10" fill="none">
          <path d="M20.500 1v39M1 20.500h39" stroke="#333" />
          <path d="M10.500 10.500h20v20h-20z" stroke="#d04040" />
          <path d="M20.500 11v19M11 20.500h19" stroke="#d04040" />
        </svg>
        <StatusWindow />
      </div>
      <div className="w-4 shrink-0 flex flex-col items-center bg-[#f0f0f0]">
        <button type="button" aria-label="Nach oben" className="w-4 h-[17px] flex items-center justify-center"><Chevron dir="up" /></button>
        <div className="flex-1 w-[15px] flex flex-col">
          <div className="flex-[535]" />
          <div className="flex-[117] bg-[#cdcdcd]" />
          <div className="flex-[204]" />
        </div>
        <button type="button" aria-label="Nach unten" className="w-4 h-[17px] flex items-center justify-center"><Chevron dir="down" /></button>
      </div>
    </div>
    <div className="h-4 shrink-0 flex items-center pr-4 bg-[#f0f0f0]">
      <button type="button" aria-label="Nach links" className="w-[17px] h-4 flex items-center justify-center"><Chevron dir="left" /></button>
      <div className="flex-1 h-[15px] flex">
        <div className="flex-[503]" />
        <div className="flex-[186] bg-[#cdcdcd]" />
        <div className="flex-[667]" />
      </div>
      <button type="button" aria-label="Nach rechts" className="w-[17px] h-4 flex items-center justify-center"><Chevron dir="right" /></button>
    </div>
  </main>
);

const StatusBar: React.FC = () => (
  <footer className="h-8 shrink-0 flex border-t border-[#999]">
    <div className="w-[197px] h-[19px] mt-[6px] pl-px flex items-center border-l border-t border-[#a0a0a0]">Rotationskörper</div>
    <div className="w-[1349px] h-[19px] mt-[6px] ml-[3px] pl-px flex items-center border-l border-t border-[#a0a0a0]">
      Selektieren Sie Kontur begrenzende 2D-Linien, eine 2D-Fläche oder eine ebene Körperfläche.
    </div>
    <div className="flex-1" />
    <svg viewBox="0 0 63 29" className="w-[63px] h-[29px] mt-[2px] mr-px" role="img" aria-label="DataSolid">
      <path d="M0 0h63v29H0z" fill="#dcdce4" />
      <path d="M5 24C-2 14 12 2 35 2c14 0 22 3 21 9-3 2-6 2-9 3-8 1-22 5-17 14-12 2-21 1-25-4z" fill="#8a8a92" transform="translate(1 0)" />
      <path d="M5 24C-2 14 12 2 35 1c14 0 22 4 20 10-3 2-6 2-9 3-8 1-20 5-18 14-12 1-19 0-23-4z" fill="#e0083c" />
      <text x="13" y="13" fontSize="11" fontWeight="bold" fontFamily="DejaVu Sans, sans-serif" fill="#fff">Data</text>
      <text x="24" y="26" fontSize="11" fontWeight="bold" fontStyle="italic" fontFamily="DejaVu Sans, sans-serif" fill="#000">Solid</text>
    </svg>
  </footer>
);

const App: React.FC = () => {
  return (
    <div className="h-screen flex flex-col overflow-hidden bg-[#f0f0f0] text-black text-[11px] leading-4 font-['Open_Sans','Noto_Sans',sans-serif]">
      <IconDefs />
      <TitleBar />
      <MenuBar />
      <MainToolbar />
      <div className="flex-1 flex min-h-0">
        <LeftDock />
        <div className="flex-1 flex flex-col">
          <ViewToolbar />
          <div className="flex-1 flex">
            <ToolColumns />
            <Viewport />
          </div>
        </div>
      </div>
      <StatusBar />
    </div>
  );
};

export default App;
